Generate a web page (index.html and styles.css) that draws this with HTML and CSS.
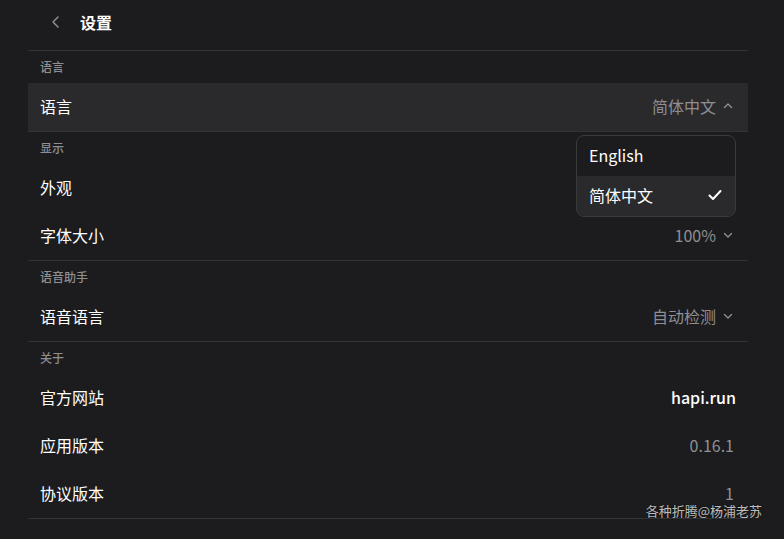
FILE: index.html
```html
<!DOCTYPE html>
<html lang="zh">
<head>
<meta charset="utf-8">
<link rel="stylesheet" href="styles.css">
</head>
<body>
<div class="page">
  <header class="header">
    <button class="back" aria-label="返回">
      <svg width="16" height="16" viewBox="0 0 16 16"><path d="M10 3 L5 8 L10 13" fill="none" stroke="#8e8e93" stroke-width="1.5" stroke-linecap="round" stroke-linejoin="round"/></svg>
    </button>
    <h1 class="title">设置</h1>
  </header>

  <section class="section">
    <div class="label">语言</div>
    <div class="row active">
      <span class="name">语言</span>
      <span class="value">简体中文
        <svg class="chev" width="10" height="10" viewBox="0 0 10 10"><path d="M1.5 6.5 L5 3 L8.5 6.5" fill="none" stroke="#8e8e93" stroke-width="1.4" stroke-linecap="round" stroke-linejoin="round"/></svg>
      </span>
      <div class="menu">
        <div class="opt">English</div>
        <div class="opt sel">简体中文
          <svg width="16" height="16" viewBox="0 0 16 16"><path d="M2.5 8.5 L6 12 L13.5 4" fill="none" stroke="#ffffff" stroke-width="2" stroke-linecap="round" stroke-linejoin="round"/></svg>
        </div>
      </div>
    </div>
  </section>

  <section class="section">
    <div class="label">显示</div>
    <div class="row"><span class="name">外观</span></div>
    <div class="row">
      <span class="name">字体大小</span>
      <span class="value">100%
        <svg class="chev" width="10" height="10" viewBox="0 0 10 10"><path d="M1.5 3.5 L5 7 L8.5 3.5" fill="none" stroke="#8e8e93" stroke-width="1.4" stroke-linecap="round" stroke-linejoin="round"/></svg>
      </span>
    </div>
  </section>

  <section class="section">
    <div class="label">语音助手</div>
    <div class="row">
      <span class="name">语音语言</span>
      <span class="value">自动检测
        <svg class="chev" width="10" height="10" viewBox="0 0 10 10"><path d="M1.5 3.5 L5 7 L8.5 3.5" fill="none" stroke="#8e8e93" stroke-width="1.4" stroke-linecap="round" stroke-linejoin="round"/></svg>
      </span>
    </div>
  </section>

  <section class="section">
    <div class="label">关于</div>
    <div class="row"><span class="name">官方网站</span><span class="link">hapi.run</span></div>
    <div class="row"><span class="name">应用版本</span><span class="value plain">0.16.1</span></div>
    <div class="row"><span class="name">协议版本</span><span class="value plain">1</span></div>
  </section>
</div>
<div class="watermark">各种折腾@杨浦老苏</div>
</body>
</html>
```

FILE: styles.css
```css
* { box-sizing: border-box; }
html, body {
  margin: 0;
  background: #1c1c1e;
  color: #ffffff;
  font-family: "Noto Sans CJK SC", "Noto Sans", sans-serif;
  height: 100%;
  overflow: hidden;
}
.page {
  width: 720px;
  margin: 0 28px;
}
.header {
  height: 51px;
  display: flex;
  align-items: center;
  gap: 8px;
  padding: 0 12px 7px;
  border-bottom: 1px solid #333336;
}
.back {
  width: 32px;
  height: 32px;
  border: 0;
  background: transparent;
  padding: 0;
  display: flex;
  align-items: center;
  justify-content: center;
}
.title {
  margin: 0;
  font-size: 16px;
  font-weight: 700;
  line-height: 24px;
}
.section {
  border-bottom: 1px solid #333336;
}
.label {
  height: 32px;
  padding: 0 12px 2px;
  display: flex;
  align-items: center;
  font-size: 12px;
  color: #8e8e93;
  font-weight: 500;
}
.row {
  position: relative;
  height: 48px;
  padding: 0 12px 2px;
  display: flex;
  align-items: center;
  justify-content: space-between;
  font-size: 16px;
}
.row.active { background: #2a2a2c; }
.value {
  display: flex;
  align-items: center;
  gap: 7px;
  margin-right: 3px;
  color: #8e8e93;
  font-size: 16px;
}
.value.plain { margin-right: 2px; }
.chev { display: block; }
.link { color: #ffffff; font-weight: 500; }
.menu {
  position: absolute;
  top: 52px;
  right: 12px;
  width: 160px;
  background: #1c1c1e;
  border: 1px solid #3a3a3c;
  border-radius: 8px;
  overflow: hidden;
  z-index: 2;
}
.opt {
  height: 40px;
  padding: 0 12px 2px;
  display: flex;
  align-items: center;
  justify-content: space-between;
  font-size: 16px;
  color: #ffffff;
}
.opt.sel { background: #2a2a2c; }
.watermark {
  position: absolute;
  right: 22px;
  bottom: 19px;
  font-size: 13px;
  color: rgba(255,255,255,0.72);
  text-shadow: 0 0 2px rgba(0,0,0,0.6);
}
```
